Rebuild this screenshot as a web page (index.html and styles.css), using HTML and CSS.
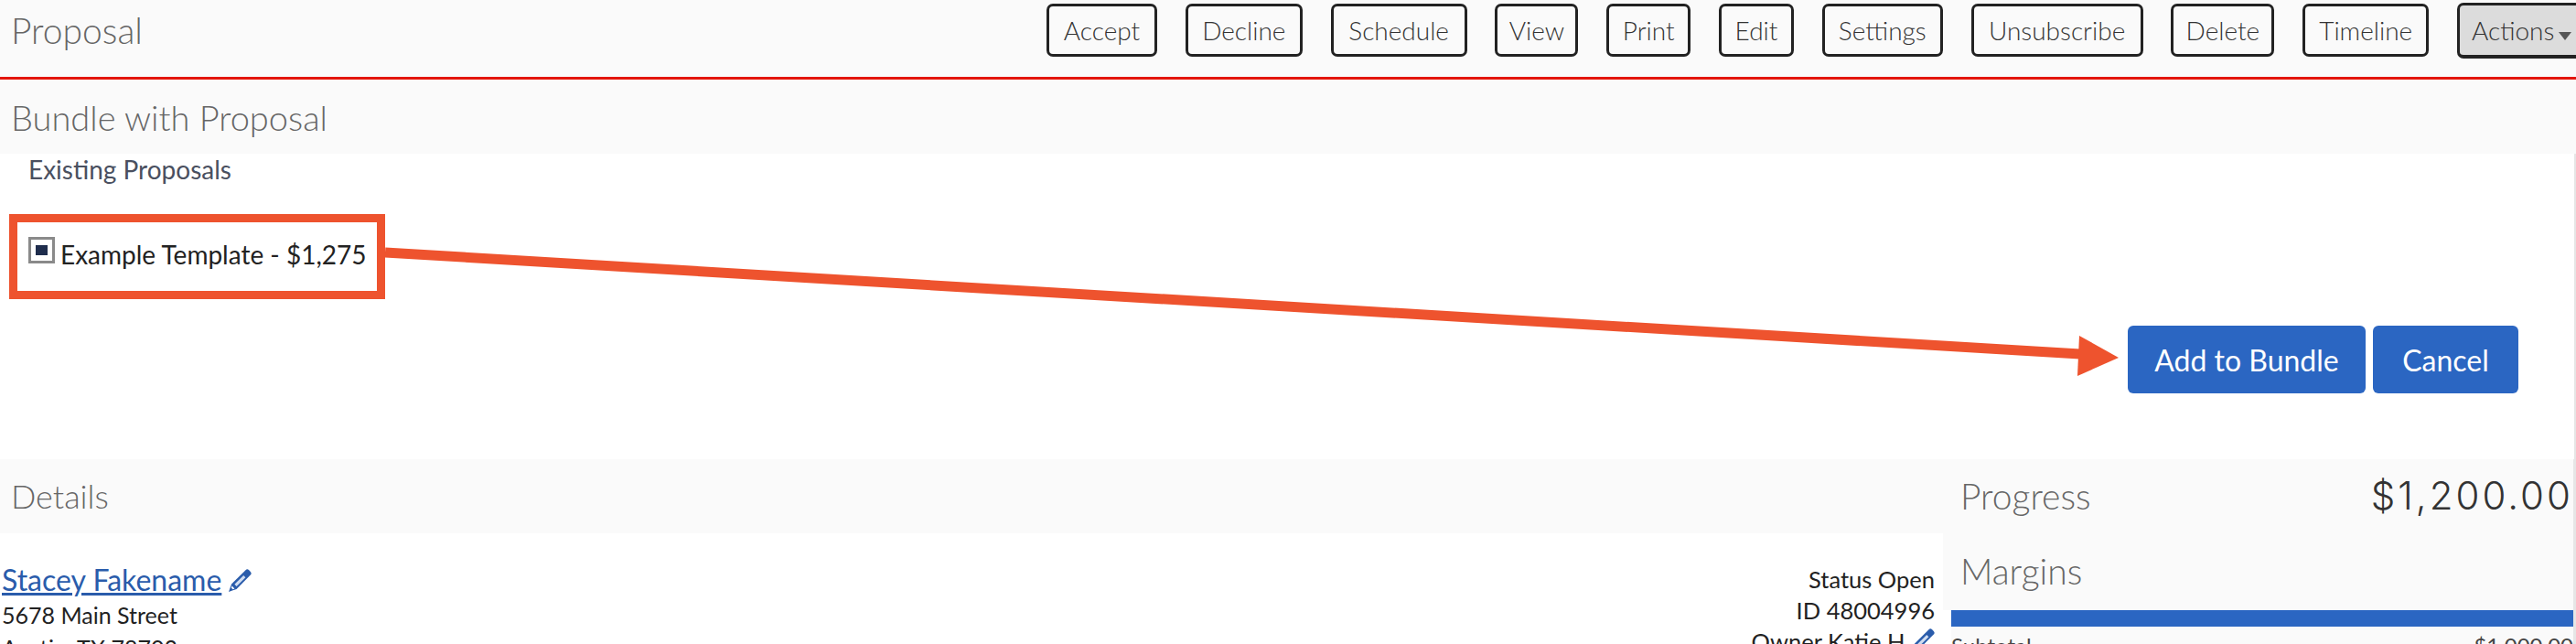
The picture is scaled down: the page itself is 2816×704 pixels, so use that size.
FILE: index.html
```html
<!DOCTYPE html>
<html lang="en">
<head>
    <meta charset="UTF-8">
    <meta name="viewport" content="width=device-width, initial-scale=1.0">
    <title>Proposal</title>
    <link rel="stylesheet" href="styles.css">
</head>
<body>

    <header class="topbar">
        <h1>Proposal</h1>
        <div class="actions">
            <button>Accept</button>
            <button>Decline</button>
            <button>Schedule</button>
            <button>View</button>
            <button>Print</button>
            <button>Edit</button>
            <button>Settings</button>
            <button>Unsubscribe</button>
            <button>Delete</button>
            <button>Timeline</button>
            <button class="menu-btn">Actions<span class="caret"></span></button>
        </div>
    </header>

    <section class="bundle">
        <h2 class="bar">Bundle with Proposal</h2>
        <div class="bundle-body">
            <p class="existing">Existing Proposals</p>
            <label class="option"><span class="check"></span>Example Template - $1,275</label>
            <div class="bundle-buttons">
                <button class="primary add">Add to Bundle</button>
                <button class="primary cancel">Cancel</button>
            </div>
        </div>
    </section>

    <div class="lower">
        <main class="details">
            <h2 class="bar details-bar">Details</h2>
            <div class="details-body">
                <div class="contact">
                    <a href="#" class="name">Stacey Fakename</a>
                    <svg class="pencil" viewBox="0 0 26 26"><use href="#pencil"/></svg><br>
                    5678 Main Street<br>
                    Austin, TX 78703
                </div>
                <div class="meta">
                    Status Open<br>
                    ID 48004996<br>
                    Owner Katie H
                    <svg class="pencil" viewBox="0 0 26 26"><use href="#pencil"/></svg>
                </div>
            </div>
        </main>
        <aside class="side">
            <div class="side-top">
                <div class="side-row progress">
                    <span>Progress</span>
                    <span class="amount">$1,200.00</span>
                </div>
                <div class="side-row margins"><span>Margins</span></div>
            </div>
            <div class="side-bottom">
                <div class="blue-rule"></div>
                <div class="totals"><span>Subtotal</span><span>$1,000.00</span></div>
            </div>
        </aside>
    </div>

    <!-- callout drawn over the page -->
    <div class="callout-box"></div>
    <svg class="callout-arrow" viewBox="0 0 2816 704">
        <line x1="421" y1="276" x2="2274" y2="387" stroke="#ee532e" stroke-width="11"/>
        <polygon points="2273,367 2316,391 2271,411" fill="#ee532e"/>
    </svg>

    <svg class="defs" width="0" height="0">
        <symbol id="pencil" viewBox="0 0 26 26">
            <path d="M19.5 1.2a2.6 2.6 0 0 1 3.6 0l1.7 1.7a2.6 2.6 0 0 1 0 3.6L9.6 21.9 1 25l3.1-8.6Z" fill="#2a5cab"/>
            <path d="M17.2 7 19.4 9.2 9.6 19 7.4 16.8Z" fill="#cfdcf0"/>
            <path d="M4.6 18.6 7.4 21.4 5.6 22.2 3.8 20.4Z" fill="#fff"/>
        </symbol>
    </svg>

</body>
</html>
```

FILE: styles.css
```css
html, body {
    margin: 0;
    height: 704px;
    overflow: hidden;
}
body {
    position: relative;
    background-color: #fff;
    font-family: "Lato", "Liberation Sans", sans-serif;
    color: #222;
}
h1, h2, p {
    margin: 0;
    font-weight: 300;
}
.topbar {
    height: 84px;
    background-color: #fafafa;
    border-bottom: 3px solid #e3150a;
    display: flex;
    justify-content: space-between;
    padding-left: 12px;
}
.topbar h1 {
    font-size: 39px;
    line-height: 66px;
    color: #666;
}
.actions {
    display: grid;
    grid-template-columns: 121px 128px 149px 91px 92px 82px 132px 188px 113px 138px 150px;
    grid-template-rows: 58px;
    gap: 30.8px;
    padding-top: 4px;
    margin-right: -20px;
}
.actions button {
    padding: 0;
    font-family: inherit;
    font-size: 28px;
    font-weight: 300;
    color: #333;
    background-color: transparent;
    border: 3px solid #222;
    border-radius: 7px;
    box-sizing: border-box;
}
.actions .menu-btn {
    height: 61px;
    margin-top: -1px;
    padding-left: 13px;
    text-align: left;
    background-color: #dcdcdc;
    border-width: 3px 0 4px 3px;
    border-radius: 7px 0 0 7px;
}
.caret {
    display: inline-block;
    margin-left: 5px;
    border-left: 7px solid transparent;
    border-right: 7px solid transparent;
    border-top: 9px solid #555;
}
.bundle {
    margin-top: 1px;
}
.bar {
    height: 80px;
    box-sizing: border-box;
    padding-left: 12px;
    background-color: #fafafa;
    font-size: 38px;
    line-height: 80px;
    color: #666;
}
.bundle-body {
    height: 334px;
    padding-left: 31px;
    box-sizing: border-box;
    position: relative;
    border-right: 2px solid #e6e6e6;
}
.existing {
    font-size: 28px;
    font-weight: 400;
    line-height: 34px;
    color: #4a5060;
}
.option {
    display: flex;
    align-items: flex-start;
    margin-top: 57px;
    font-size: 28px;
    line-height: 38px;
    color: #222;
}
.check {
    width: 29px;
    height: 29px;
    box-sizing: border-box;
    margin-right: 6px;
    border: 3px solid #8a8a8a;
    padding: 6px 5px;
    background-clip: content-box;
    background-color: #1f2d4d;
    flex: none;
}
.bundle-buttons {
    position: absolute;
    top: 188px;
    right: 61px;
    display: flex;
    gap: 8px;
}
.primary {
    height: 74px;
    font-family: inherit;
    font-size: 32px;
    color: #fff;
    background-color: #2b66c2;
    border: none;
    border-radius: 6px;
}
.add { width: 260px; }
.cancel { width: 159px; }
.lower {
    display: flex;
    height: 210px;
    border-right: 3px solid #e6e6e6;
}
.details {
    flex: none;
    width: 2124px;
}
.details-bar {
    height: 81px;
    font-size: 36px;
}
.details-body {
    display: flex;
    justify-content: space-between;
    padding: 33px 9px 0 2px;
    font-size: 26px;
    line-height: 36px;
    color: #222;
}
.contact {
    font-size: 25px;
}
.meta {
    text-align: right;
    font-size: 25.5px;
    line-height: 34px;
}
.name {
    font-size: 32px;
    color: #2a5cab;
}
.pencil {
    width: 26px;
    height: 26px;
    vertical-align: -2px;
}
.side {
    flex: 1;
    color: #666;
}
.side-top {
    background-color: #fafafa;
    height: 165px;
}
.side-bottom {
    margin-left: 9px;
    height: 45px;
    background-color: #fafafa;
}
.side-row {
    display: flex;
    justify-content: space-between;
    padding-left: 19px;
    font-size: 39px;
    font-weight: 300;
}
.progress {
    line-height: 80px;
}
.amount {
    font-family: "Inter", "Liberation Sans", sans-serif;
    font-size: 42px;
    letter-spacing: 3px;
    color: #333;
}
.margins {
    line-height: 84px;
}
.blue-rule {
    height: 18px;
    background-color: #2b66c2;
}
.totals {
    display: flex;
    justify-content: space-between;
    margin-top: 6px;
    font-size: 24px;
    color: #444;
}
.callout-box {
    position: absolute;
    left: 10px;
    top: 234px;
    width: 411px;
    height: 93px;
    box-sizing: border-box;
    border: 9px solid #ee532e;
}
.callout-arrow {
    position: absolute;
    left: 0;
    top: 0;
    width: 2816px;
    height: 704px;
}
.defs {
    position: absolute;
}
```
